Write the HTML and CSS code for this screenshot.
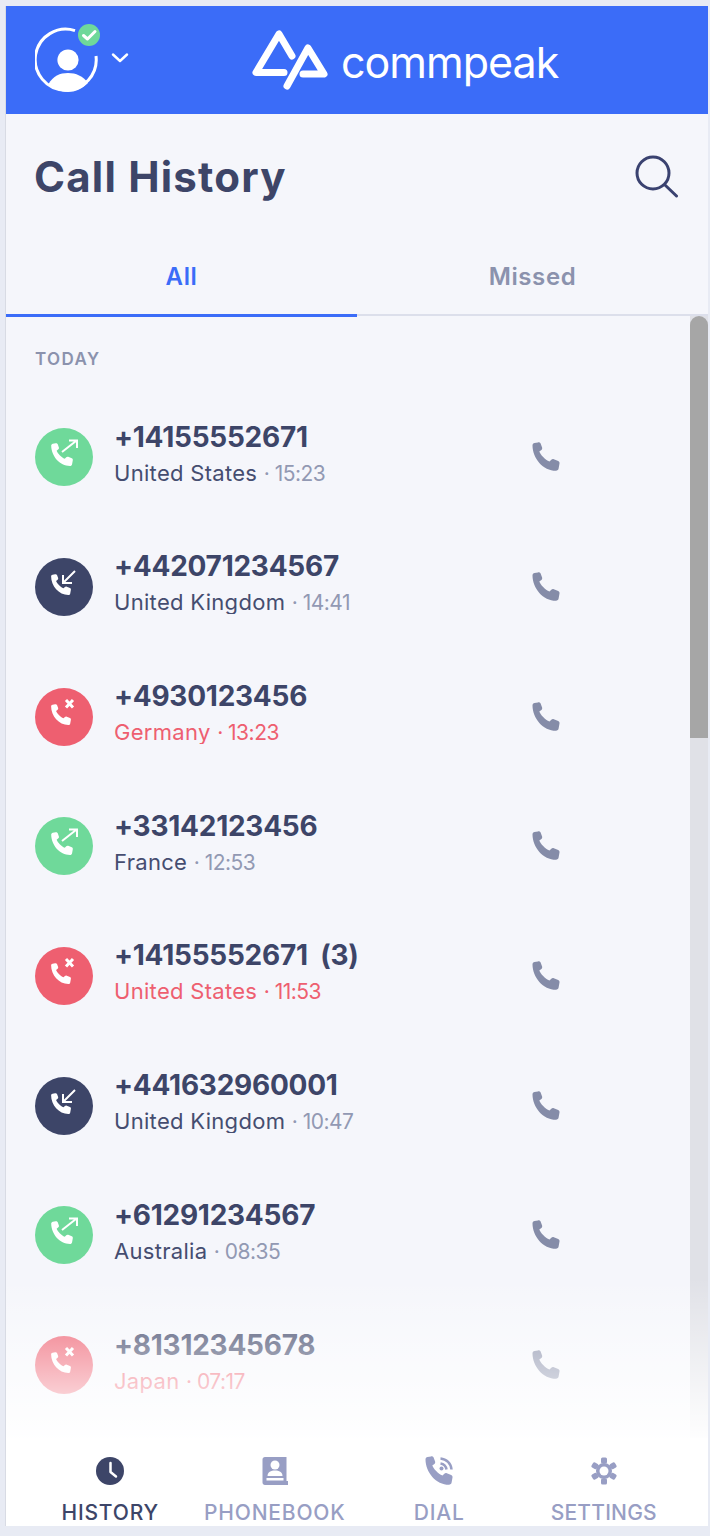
FILE: index.html
```html
<!DOCTYPE html>
<html lang="en">
<head>
<meta charset="utf-8">
<title>Call History</title>
<link rel="stylesheet" href="styles.css">
</head>
<body>
<svg class="defs" width="0" height="0" aria-hidden="true">
  <symbol id="phone" viewBox="0 0 30 30">
    <path d="M1.5 3.2C1.5 2.1 2.4 1.3 3.5 1L7 .4C8.2.1 9.3.7 9.7 1.7L11.1 5.5C11.4 6.4 11.1 7.3 10.4 7.9L8.3 9.6C9.6 12.8 14 18 18.5 19.6L20.3 17.8C21 17.1 22 16.9 22.8 17.3L27.2 19.1C28.2 19.6 28.7 20.5 28.5 21.6L27.6 26.6C27.4 27.9 26.3 28.8 25 28.8C12 28.8 1.5 16.2 1.5 3.2Z"/>
  </symbol>
</svg>
<div class="app">
  <header class="topbar">
    <div class="account">
      <svg class="avatar" width="70" height="72" viewBox="0 0 70 72">
        <path class="ring" d="M40 7.6A30.5 30.5 0 1 0 61 33" />
        <circle class="fill-white" cx="33" cy="37" r="10.6"/>
        <path class="fill-white" d="M13.5 61C18 53 25 50 33 50S48 53 53 60C47 66 40 69 33 69S19 66 13.5 61Z"/>
        <circle class="badge" cx="54" cy="12" r="11"/>
        <path class="tick" d="M48.5 12.5L52.5 16L60 8.5"/>
      </svg>
      <svg class="chev" width="18" height="10" viewBox="0 0 18 10"><path d="M2 1.5L9 8L16 1.5"/></svg>
    </div>
    <div class="brand">
      <svg class="mark" width="80" height="64" viewBox="0 0 80 64">
        <path d="M41 28L28 6L5 44.500H33"/>
        <path d="M36 58L57 20L73 46H52"/>
      </svg>
      <span class="wordmark">commpeak</span>
    </div>
  </header>

  <div class="titlebar">
    <h1 class="title">Call History</h1>
    <svg class="search" width="46" height="44" viewBox="0 0 46 44"><circle cx="20" cy="19" r="16"/><path d="M32 31L43.500 42"/></svg>
  </div>

  <nav class="tabs">
    <div class="tab tab-active">All</div>
    <div class="tab">Missed</div>
  </nav>

  <main class="content">
    <div class="list">
      <div class="day">TODAY</div>

      <div class="row">
        <span class="dot out"><svg class="glyph" width="58" height="58" viewBox="0 0 58 58"><use href="#phone" x="15" y="15" width="24" height="24"/><path d="M27 24L41 13M34 12.500H42V20"/></svg></span>
        <div class="info"><div class="num">+14155552671</div><div class="sub">United States <span class="time">· 15:23</span></div></div>
        <svg class="call" width="30" height="30"><use href="#phone"/></svg>
      </div>

      <div class="row">
        <span class="dot in"><svg class="glyph" width="58" height="58" viewBox="0 0 58 58"><use href="#phone" x="15" y="16" width="22" height="22"/><path d="M40 13L28 25M28 17V25H37"/></svg></span>
        <div class="info"><div class="num">+442071234567</div><div class="sub">United Kingdom <span class="time">· 14:41</span></div></div>
        <svg class="call" width="30" height="30"><use href="#phone"/></svg>
      </div>

      <div class="row">
        <span class="dot miss"><svg class="glyph" width="58" height="58" viewBox="0 0 58 58"><use href="#phone" x="15" y="16" width="22" height="22"/><path class="x" d="M31 12L38 19.500M38 12L31 19.500"/></svg></span>
        <div class="info"><div class="num">+4930123456</div><div class="sub sub-miss">Germany <span class="time-miss">· 13:23</span></div></div>
        <svg class="call" width="30" height="30"><use href="#phone"/></svg>
      </div>

      <div class="row">
        <span class="dot out"><svg class="glyph" width="58" height="58" viewBox="0 0 58 58"><use href="#phone" x="15" y="15" width="24" height="24"/><path d="M27 24L41 13M34 12.500H42V20"/></svg></span>
        <div class="info"><div class="num">+33142123456</div><div class="sub">France <span class="time">· 12:53</span></div></div>
        <svg class="call" width="30" height="30"><use href="#phone"/></svg>
      </div>

      <div class="row">
        <span class="dot miss"><svg class="glyph" width="58" height="58" viewBox="0 0 58 58"><use href="#phone" x="15" y="16" width="22" height="22"/><path class="x" d="M31 12L38 19.500M38 12L31 19.500"/></svg></span>
        <div class="info"><div class="num">+14155552671 (3)</div><div class="sub sub-miss">United States <span class="time-miss">· 11:53</span></div></div>
        <svg class="call" width="30" height="30"><use href="#phone"/></svg>
      </div>

      <div class="row">
        <span class="dot in"><svg class="glyph" width="58" height="58" viewBox="0 0 58 58"><use href="#phone" x="15" y="16" width="22" height="22"/><path d="M40 13L28 25M28 17V25H37"/></svg></span>
        <div class="info"><div class="num">+441632960001</div><div class="sub">United Kingdom <span class="time">· 10:47</span></div></div>
        <svg class="call" width="30" height="30"><use href="#phone"/></svg>
      </div>

      <div class="row">
        <span class="dot out"><svg class="glyph" width="58" height="58" viewBox="0 0 58 58"><use href="#phone" x="15" y="15" width="24" height="24"/><path d="M27 24L41 13M34 12.500H42V20"/></svg></span>
        <div class="info"><div class="num">+61291234567</div><div class="sub">Australia <span class="time">· 08:35</span></div></div>
        <svg class="call" width="30" height="30"><use href="#phone"/></svg>
      </div>

      <div class="row">
        <span class="dot miss"><svg class="glyph" width="58" height="58" viewBox="0 0 58 58"><use href="#phone" x="15" y="16" width="22" height="22"/><path class="x" d="M31 12L38 19.500M38 12L31 19.500"/></svg></span>
        <div class="info"><div class="num">+81312345678</div><div class="sub sub-miss">Japan <span class="time-miss">· 07:17</span></div></div>
        <svg class="call" width="30" height="30"><use href="#phone"/></svg>
      </div>
    </div>
    <div class="scrollbar"><div class="thumb"></div></div>
    <div class="fade"></div>
  </main>

  <footer class="bottom">
    <div class="item item-active">
      <svg class="nav-ico" width="30" height="30" viewBox="0 0 30 30"><circle class="solid" cx="15" cy="15" r="14"/><path class="hand" d="M15.500 7V16L21 20.500"/></svg>
      <span>HISTORY</span>
    </div>
    <div class="item">
      <svg class="nav-ico" width="30" height="30" viewBox="0 0 30 30"><path class="solid" d="M5 1H26.500V25H28V29H5C3.500 29 2.500 28 2.500 26.500V3.500C2.500 2 3.500 1 5 1Z"/><circle class="cut" cx="15" cy="9" r="4.500"/><path class="cut" d="M7.500 20C7.500 16 11 14.500 15 14.500S22.500 16 22.500 20Z"/><rect class="cut" x="6.500" y="22" width="17" height="2.500"/></svg>
      <span>PHONEBOOK</span>
    </div>
    <div class="item">
      <svg class="nav-ico" width="30" height="30" viewBox="0 0 30 30"><use class="solid" href="#phone"/><g class="waves"><path d="M16.500 2.500C22.500 3 27 7.500 27.500 13.500"/><path d="M16.500 7.500C19.500 8 22 10.500 22.500 13.500"/></g><circle class="solid" cx="17.500" cy="12.500" r="2"/></svg>
      <span>DIAL</span>
    </div>
    <div class="item item-tight">
      <svg class="nav-ico" width="30" height="30" viewBox="0 0 30 30"><g class="gear"><circle cx="15" cy="15" r="8"/><rect x="12" y="1.500" width="6" height="6" rx="1.500"/><rect x="12" y="1.500" width="6" height="6" rx="1.500" transform="rotate(60 15 15)"/><rect x="12" y="1.500" width="6" height="6" rx="1.500" transform="rotate(120 15 15)"/><rect x="12" y="1.500" width="6" height="6" rx="1.500" transform="rotate(180 15 15)"/><rect x="12" y="1.500" width="6" height="6" rx="1.500" transform="rotate(240 15 15)"/><rect x="12" y="1.500" width="6" height="6" rx="1.500" transform="rotate(300 15 15)"/></g><circle class="cut" cx="15" cy="15" r="4.500"/></svg>
      <span>SETTINGS</span>
    </div>
  </footer>
</div>
</body>
</html>
```
FILE: styles.css
```css
* { box-sizing: border-box; }
html, body { margin: 0; height: 100%; }
body {
  background: #e8ebf4;
  font-family: Inter, "Open Sans", sans-serif;
  color: #3d4568;
  overflow: hidden;
}
.defs { position: absolute; }
.app {
  width: 702px;
  height: 1520px;
  margin: 6px 0 0 6px;
  background: #f5f6fb;
  display: flex;
  flex-direction: column;
  box-shadow: -1px 0 0 #d8dbe4;
}
.topbar {
  height: 108px;
  background: #3b6cf8;
  position: relative;
  display: flex;
  align-items: center;
  flex: none;
}
.account {
  display: flex;
  align-items: center;
  margin-left: 29px;
  gap: 6px;
}
.avatar { margin-top: -2px; }
.ring { fill: none; stroke: #fff; stroke-width: 3; }
.fill-white { fill: #fff; }
.badge { fill: #6fd89a; }
.tick { fill: none; stroke: #fff; stroke-width: 3; stroke-linecap: round; stroke-linejoin: round; }
.chev { margin-top: -4px; }
.chev path { fill: none; stroke: #fff; stroke-width: 2.4; stroke-linecap: round; stroke-linejoin: round; }
.brand {
  display: flex;
  align-items: center;
  margin-left: 122px;
  gap: 10px;
}
.mark path { fill: none; stroke: #fff; stroke-width: 7; stroke-linecap: round; stroke-linejoin: round; }
.wordmark {
  color: #fff;
  font-size: 43px;
  font-weight: 400;
  line-height: 60px;
  letter-spacing: -1px;
  padding-top: 4px;
}
.titlebar {
  flex: none;
  height: 122px;
  display: flex;
  align-items: center;
  justify-content: space-between;
  padding: 2px 29px 0 28px;
}
.title {
  margin: 0;
  font-size: 42px;
  font-weight: 700;
  letter-spacing: 1.2px;
  color: #3d4568;
}
.search circle, .search path { fill: none; stroke: #3a4270; stroke-width: 3; stroke-linecap: round; }
.tabs {
  flex: none;
  height: 80px;
  display: flex;
  border-bottom: 2px solid #dcdfeb;
}
.tab {
  width: 50%;
  text-align: center;
  font-size: 24px;
  font-weight: 600;
  letter-spacing: 0.6px;
  line-height: 82px;
  color: #8b92ad;
  height: 81px;
}
.tab-active { color: #3b6cf8; border-bottom: 3px solid #3b6cf8; }
.content {
  flex: 1;
  min-height: 0;
  display: flex;
  position: relative;
  overflow: hidden;
}
.list { flex: 1; min-width: 0; }
.day {
  height: 76.4px;
  padding: 33px 0 0 29px;
  font-size: 17px;
  line-height: 20px;
  font-weight: 600;
  letter-spacing: 1.4px;
  color: #8b92ad;
}
.row {
  height: 129.7px;
  display: flex;
  align-items: center;
  padding-left: 29px;
  padding-right: 129px;
  gap: 21px;
}
.dot {
  width: 58px;
  height: 58px;
  border-radius: 50%;
  flex: none;
  display: block;
}
.out { background: #6fd99a; }
.in { background: #3d4568; }
.miss { background: #ee5f70; }
.glyph { display: block; fill: #fff; }
.glyph path { fill: none; stroke: #fff; stroke-width: 2; }
.glyph .x { stroke-width: 3; }
.info { flex: 1; min-width: 0; margin-top: -11px; }
.num {
  font-size: 28px;
  font-weight: 700;
  line-height: 36px;
  margin-bottom: 5px;
  color: #3d4568;
  letter-spacing: -0.25px;
  word-spacing: 6px;
}
.sub {
  font-size: 22px;
  line-height: 27px;
  height: 25px;
  overflow: hidden;
  letter-spacing: 0.3px;
  color: #454d70;
}
.time, .time-miss { font-size: 21px; letter-spacing: -0.5px; }
.time { color: #9299b3; }
.sub-miss { color: #ee5f70; }
.call { flex: none; fill: #858ca8; }
.scrollbar {
  flex: none;
  width: 18px;
  background: #e0e1e7;
}
.thumb {
  height: 422px;
  background: #a6a6a6;
  border-radius: 9px 9px 0 0;
}
.fade {
  position: absolute;
  left: 0;
  right: 0;
  bottom: 0;
  height: 160px;
  background: linear-gradient(to bottom, rgba(255,255,255,0), rgba(255,255,255,0.96));
  pointer-events: none;
}
.bottom {
  flex: none;
  height: 88px;
  background: #fff;
  display: grid;
  grid-template-columns: repeat(4, 1fr);
  padding: 0 22px;
  overflow: hidden;
}
.item {
  display: flex;
  flex-direction: column;
  align-items: center;
  padding-top: 18px;
  color: #989ec4;
  fill: #989ec4;
  font-size: 21px;
  font-weight: 500;
  letter-spacing: 0.8px;
  line-height: 34px;
  white-space: nowrap;
}
.item-tight { letter-spacing: 0.2px; }
.item-active { color: #3d4568; fill: #3d4568; }
.nav-ico { display: block; flex: none; margin-bottom: 10px; }
.cut { fill: #fff; }
.hand { fill: none; stroke: #fff; stroke-width: 2.500; stroke-linecap: round; stroke-linejoin: round; }
.waves path { fill: none; stroke: #989ec4; stroke-width: 2.500; }
```
